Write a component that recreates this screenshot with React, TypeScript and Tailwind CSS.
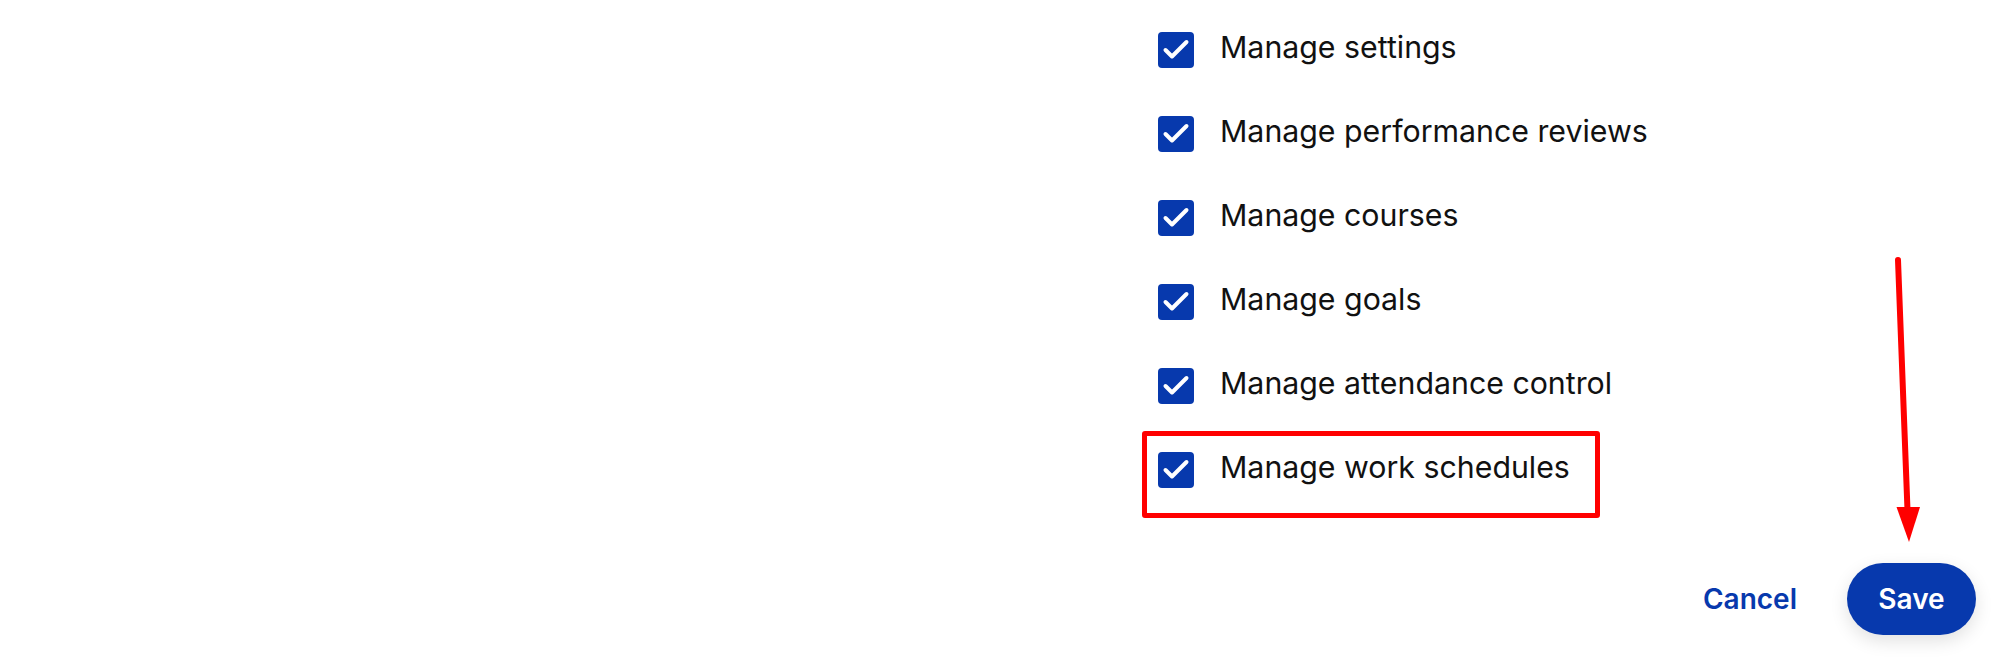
import { useState } from 'react'

const permissions = [
  'Manage settings',
  'Manage performance reviews',
  'Manage courses',
  'Manage goals',
  'Manage attendance control',
  'Manage work schedules',
]

function Checkbox({ checked, onChange }: { checked: boolean; onChange: () => void }) {
  return (
    <button
      type="button"
      onClick={onChange}
      className={`flex h-[36px] w-[36px] shrink-0 items-center justify-center rounded-[4px] ${
        checked ? 'bg-[#0739ad]' : 'border-2 border-gray-400 bg-white'
      }`}
    >
      {checked && (
        <svg width="36" height="36" viewBox="0 0 36 36" fill="none">
          <path d="M7.5 18 L14 24.5 L28.5 10" stroke="#fff" strokeWidth="4" strokeLinecap="round" strokeLinejoin="round" />
        </svg>
      )}
    </button>
  )
}

export default function App() {
  const [checked, setChecked] = useState<boolean[]>(permissions.map(() => true))

  const toggle = (i: number) => setChecked(prev => prev.map((c, j) => (j === i ? !c : c)))

  return (
    <div className="relative h-[664px] w-[2002px] overflow-hidden bg-white font-['Inter',_'Liberation_Sans',_sans-serif] text-[#111]">
      <div className="flex">
        <div className="w-[1158px] shrink-0" />
        <div className="flex flex-1 flex-col pt-[8px] pr-[26px]">
          {permissions.map((label, i) => (
            <div key={label} className="relative flex h-[84px] items-center gap-[26px]">
              <Checkbox checked={checked[i]} onChange={() => toggle(i)} />
              <span className="pb-[6px] text-[30.3px] leading-none">{label}</span>
              {/* highlight annotation */}
              {i === permissions.length - 1 && (
                <div className="pointer-events-none absolute top-[3px] left-[-16px] h-[87px] w-[458px] rounded-[3px] border-[5px] border-[#ff0000]" />
              )}
            </div>
          ))}

          <div className="mt-[51px] flex items-center justify-end gap-[50px]">
            <button type="button" className="text-[28px] font-semibold text-[#0739ad]">
              Cancel
            </button>
            <button
              type="button"
              className="h-[72px] w-[129px] rounded-full bg-[#0739ad] text-[28px] font-semibold text-white shadow-[0_6px_18px_rgba(0,0,0,0.12)]"
            >
              Save
            </button>
          </div>
        </div>
      </div>

      {/* arrow annotation */}
      <svg className="pointer-events-none absolute inset-0" width="2002" height="664">
        <line x1="1898" y1="260" x2="1907.5" y2="510" stroke="#ff0000" strokeWidth="6" strokeLinecap="round" />
        <polygon points="1896.5,507 1920,507 1909,542" fill="#ff0000" />
      </svg>
    </div>
  )
}
